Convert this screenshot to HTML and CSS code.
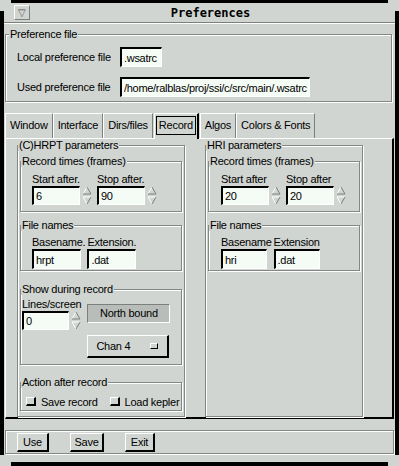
FILE: index.html
```html
<!DOCTYPE html>
<html lang="en">
<head>
    <meta charset="UTF-8">
    <title>Preferences</title>
    <link rel="stylesheet" href="styles.css">
</head>
<body>

<div class="corner tl"></div>
<div class="corner tr"></div>
<div class="corner bl"></div>
<div class="corner br"></div>

<div class="window">
    <div class="titlebar">
        <span class="menubtn">&#9661;</span>
        <span class="title">Preferences</span>
    </div>

    <fieldset class="group prefs">
        <legend>Preference file</legend>
        <div class="prefgrid">
            <label>Local preference file</label>
            <input class="entry w42" value=".wsatrc">
            <label>Used preference file</label>
            <input class="entry w190" value="/home/ralblas/proj/ssi/c/src/main/.wsatrc">
        </div>
    </fieldset>

    <div class="tabs">
        <div class="tab">Window</div>
        <div class="tab">Interface</div>
        <div class="tab">Dirs/files</div>
        <div class="tab active"><span class="focus">Record</span></div>
        <div class="tab">Algos</div>
        <div class="tab">Colors &amp; Fonts</div>
    </div>

    <div class="panel">
        <fieldset class="group col hrpt">
            <legend>(C)HRPT parameters</legend>
            <div class="colbody">
                <fieldset class="group times">
                    <legend>Record times (frames)</legend>
                    <div class="inner pad11">
                        <div class="spincol">
                            <label>Start after.</label>
                            <div class="spinrow">
                                <input class="entry w48" value="6">
                                <svg class="spin" width="10" height="19" viewBox="0 0 10 19"><polyline points="1,8 5,1" stroke="#fff" fill="none"/><polyline points="5,1 9,8 1,8" stroke="#7c807c" fill="none"/><polyline points="1,11 9,11" stroke="#fff" fill="none"/><polyline points="1,11 5,18" stroke="#fff" fill="none"/><polyline points="9,11 5,18" stroke="#7c807c" fill="none"/></svg>
                            </div>
                        </div>
                        <div class="spincol">
                            <label>Stop after.</label>
                            <div class="spinrow">
                                <input class="entry w48" value="90">
                                <svg class="spin" width="10" height="19" viewBox="0 0 10 19"><polyline points="1,8 5,1" stroke="#fff" fill="none"/><polyline points="5,1 9,8 1,8" stroke="#7c807c" fill="none"/><polyline points="1,11 9,11" stroke="#fff" fill="none"/><polyline points="1,11 5,18" stroke="#fff" fill="none"/><polyline points="9,11 5,18" stroke="#7c807c" fill="none"/></svg>
                            </div>
                        </div>
                    </div>
                </fieldset>

                <fieldset class="group names">
                    <legend>File names</legend>
                    <div class="inner pad11 tight">
                        <div class="namecol">
                            <label>Basename.</label>
                            <input class="entry w49 h20" value="hrpt">
                        </div>
                        <div class="namecol">
                            <label>Extension.</label>
                            <input class="entry w49 h20" value=".dat">
                        </div>
                    </div>
                </fieldset>

                <fieldset class="group show">
                    <legend>Show during record</legend>
                    <div class="inner showbody">
                        <div class="linescol">
                            <label>Lines/screen</label>
                            <div class="spinrow">
                                <input class="entry w47" value="0">
                                <svg class="spin" width="10" height="19" viewBox="0 0 10 19"><polyline points="1,8 5,1" stroke="#fff" fill="none"/><polyline points="5,1 9,8 1,8" stroke="#7c807c" fill="none"/><polyline points="1,11 9,11" stroke="#fff" fill="none"/><polyline points="1,11 5,18" stroke="#fff" fill="none"/><polyline points="9,11 5,18" stroke="#7c807c" fill="none"/></svg>
                            </div>
                        </div>
                        <div class="dircol">
                            <div class="northbound">North bound</div>
                            <div class="chanbtn">Chan 4 <span class="indicator"></span></div>
                        </div>
                    </div>
                </fieldset>

                <fieldset class="group action">
                    <legend>Action after record</legend>
                    <div class="inner actionbody">
                        <span class="check"></span><span class="checktext">Save record</span>
                        <span class="check"></span><span>Load kepler</span>
                    </div>
                </fieldset>
            </div>
        </fieldset>

        <fieldset class="group col hri">
            <legend>HRI parameters</legend>
            <div class="colbody">
                <fieldset class="group times">
                    <legend>Record times (frames)</legend>
                    <div class="inner pad12">
                        <div class="spincol">
                            <label>Start after</label>
                            <div class="spinrow">
                                <input class="entry w48" value="20">
                                <svg class="spin" width="10" height="19" viewBox="0 0 10 19"><polyline points="1,8 5,1" stroke="#fff" fill="none"/><polyline points="5,1 9,8 1,8" stroke="#7c807c" fill="none"/><polyline points="1,11 9,11" stroke="#fff" fill="none"/><polyline points="1,11 5,18" stroke="#fff" fill="none"/><polyline points="9,11 5,18" stroke="#7c807c" fill="none"/></svg>
                            </div>
                        </div>
                        <div class="spincol">
                            <label>Stop after</label>
                            <div class="spinrow">
                                <input class="entry w48" value="20">
                                <svg class="spin" width="10" height="19" viewBox="0 0 10 19"><polyline points="1,8 5,1" stroke="#fff" fill="none"/><polyline points="5,1 9,8 1,8" stroke="#7c807c" fill="none"/><polyline points="1,11 9,11" stroke="#fff" fill="none"/><polyline points="1,11 5,18" stroke="#fff" fill="none"/><polyline points="9,11 5,18" stroke="#7c807c" fill="none"/></svg>
                            </div>
                        </div>
                    </div>
                </fieldset>

                <fieldset class="group names">
                    <legend>File names</legend>
                    <div class="inner pad12 tight">
                        <div class="namecol">
                            <label>Basename</label>
                            <input class="entry w46 h20" value="hri">
                        </div>
                        <div class="namecol">
                            <label>Extension</label>
                            <input class="entry w46 h20" value=".dat">
                        </div>
                    </div>
                </fieldset>
            </div>
        </fieldset>
    </div>

    <div class="group buttonbar">
        <button class="btn w32">Use</button>
        <button class="btn w34">Save</button>
        <button class="btn w30">Exit</button>
    </div>
</div>

</body>
</html>
```

FILE: styles.css
```css
* {
    box-sizing: border-box;
}

body {
    margin: 0;
    padding: 3px 0 0 4px;
    height: 466px;
    overflow: hidden;
    background: #000;
    font-family: "Liberation Sans", Arial, sans-serif;
    font-size: 11px;
    letter-spacing: -0.25px;
    color: #000;
}

.corner {
    position: absolute;
    width: 11px;
    height: 11px;
    border-color: #d1d5d1;
    border-style: solid;
    border-width: 0;
}
.corner.tl { left: 0; top: 0; border-top-width: 3px; border-left-width: 4px; }
.corner.tr { right: 0; top: 0; border-top-width: 3px; border-right-width: 4px; }
.corner.bl { left: 0; bottom: 0; border-bottom-width: 4px; border-left-width: 4px; }
.corner.br { right: 0; bottom: 0; border-bottom-width: 4px; border-right-width: 4px; }

.window {
    width: 391px;
    height: 459px;
    background: #d1d5d1;
    display: flex;
    flex-direction: column;
}

.titlebar {
    height: 20px;
    display: flex;
    align-items: center;
    border-bottom: 1px solid #7c807c;
    box-shadow: 0 1px 0 #fff;
    flex: none;
}
.menubtn {
    width: 16px;
    height: 15px;
    margin-left: 10px;
    border-top: 1px solid #fff;
    border-left: 1px solid #fff;
    border-right: 1px solid #7c807c;
    border-bottom: 1px solid #7c807c;
    font-size: 10px;
    line-height: 13px;
    text-align: center;
    color: #555;
}
.title {
    flex: 1;
    text-align: center;
    font-family: "DejaVu Sans Mono", monospace;
    font-weight: bold;
    font-size: 12px;
    letter-spacing: 0;
    padding-right: 4px;
}

/* etched frames */
.group {
    border: 1px solid #848884;
    box-shadow: inset 1px 1px 0 #fff, 1px 1px 0 #fff;
    margin: 0;
    padding: 0;
    min-width: 0;
}
.group legend {
    padding: 0 1px;
    line-height: 12px;
    background: #d1d5d1;
    white-space: nowrap;
}

.prefs {
    margin: 5px 3px 0 1px;
    flex: none;
}
.prefs legend {
    margin-left: 3px;
}
.prefgrid {
    display: grid;
    grid-template-columns: 103px auto;
    align-items: center;
    row-gap: 10px;
    padding: 7px 0 4px 11px;
}

.entry {
    height: 19px;
    border-style: solid;
    border-width: 2px 1px 1px 2px;
    border-color: #000 #fff #fff #000;
    background: #f5fbf5;
    font-family: inherit;
    font-size: 11px;
    letter-spacing: -0.3px;
    color: #000;
    padding: 0 1px 0 2px;
    margin: 0;
    outline: none;
}
.h20 { height: 20px; }
.prefgrid .entry { height: 20px; }
.w42 { width: 42px; }
.w190 { width: 190px; }
.w46 { width: 46px; }
.w47 { width: 47px; }
.w48 { width: 48px; }
.w49 { width: 49px; }

.tabs {
    display: flex;
    margin: 11px 0 0 1px;
    flex: none;
}
.tab {
    height: 25px;
    padding: 0 4px;
    line-height: 23px;
    border-top: 1px solid #fff;
    border-left: 1px solid #fff;
    border-right: 1px solid #7c807c;
    white-space: nowrap;
}
.tab.active {
    position: relative;
    z-index: 1;
    margin: 0 1px -1px 1px;
    height: 26px;
    padding: 2px 1px 0;
    line-height: 17px;
    background: #d1d5d1;
    border-right: 2px solid #000;
}
.focus {
    display: block;
    border: 1px solid #000;
    padding: 0 2px;
    line-height: 17px;
}

.panel {
    display: flex;
    gap: 20px;
    height: 281px;
    margin: 0 1px 0 1px;
    padding: 0 0 0 11px;
    border-top: 1px solid #fff;
    border-left: 1px solid #fff;
    border-right: 2px solid #000;
    border-bottom: 2px solid #000;
    flex: none;
}
.col.hrpt { width: 168px; }
.col.hri { width: 158px; }
.colbody {
    padding: 0 2px;
}

.inner {
    display: flex;
}
.pad11 { padding-left: 11px; }
.pad12 { padding-left: 12px; }

.times { margin-top: 4px; }
.times .inner {
    gap: 5px;
    padding-top: 6px;
    padding-bottom: 6px;
}
.spincol label,
.namecol label,
.linescol label {
    display: block;
    line-height: 13px;
    white-space: nowrap;
}
.spinrow {
    display: flex;
    align-items: center;
    gap: 2px;
}
.spin {
    display: block;
}

.names { margin-top: 7px; }
.names .inner {
    gap: 2px;
    padding-top: 5px;
    padding-bottom: 1px;
}

.show { margin-top: 12px; }
.showbody {
    padding: 3px 0 6px 1px;
    gap: 6px;
}
.dircol {
    padding-top: 6px;
}
.northbound {
    width: 83px;
    height: 19px;
    line-height: 17px;
    text-align: center;
    background: #b9bdb9;
    border-top: 1px solid #7c807c;
    border-left: 1px solid #7c807c;
    border-right: 1px solid #fff;
    border-bottom: 1px solid #fff;
}
.chanbtn {
    display: flex;
    align-items: center;
    justify-content: space-between;
    width: 82px;
    height: 23px;
    margin-top: 12px;
    padding: 0 9px 0 8px;
    border-top: 1px solid #fff;
    border-left: 1px solid #fff;
    border-right: 2px solid #000;
    border-bottom: 2px solid #000;
}
.indicator {
    width: 8px;
    height: 6px;
    border-top: 1px solid #fff;
    border-left: 1px solid #fff;
    border-right: 1px solid #000;
    border-bottom: 1px solid #000;
}

.action { margin-top: 11px; }
.actionbody {
    align-items: center;
    height: 22px;
    padding: 7px 0 2px 5px;
    white-space: nowrap;
}
.check {
    flex: none;
    width: 10px;
    height: 9px;
    margin-right: 5px;
    border-top: 1px solid #fff;
    border-left: 1px solid #fff;
    border-right: 2px solid #000;
    border-bottom: 2px solid #000;
}
.checktext {
    margin-right: 12px;
}

.buttonbar {
    display: flex;
    align-items: center;
    gap: 21px;
    height: 24px;
    margin: 11px 1px 0 1px;
    padding: 0 0 0 11px;
    flex: none;
}
.btn {
    height: 19px;
    padding: 0;
    background: #d1d5d1;
    font-family: inherit;
    font-size: 11px;
    letter-spacing: -0.25px;
    color: #000;
    border-top: 1px solid #fff;
    border-left: 1px solid #fff;
    border-right: 2px solid #000;
    border-bottom: 2px solid #000;
    border-radius: 0;
}
.w30 { width: 30px; }
.w32 { width: 32px; }
.w34 { width: 34px; }
```
